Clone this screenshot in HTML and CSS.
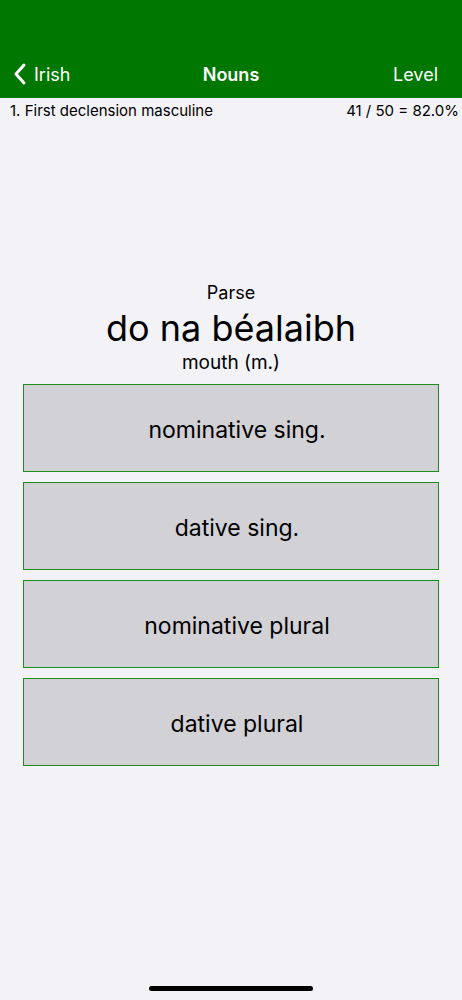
FILE: index.html
```html
<!DOCTYPE html>
<html lang="en">
<head>
    <meta charset="UTF-8">
    <meta name="viewport" content="width=device-width, initial-scale=1.0">
    <title>Nouns</title>
    <link rel="stylesheet" href="styles.css">
</head>
<body>
<div class="header">
    <div class="nav">
        <a class="back" href="#">
            <svg class="chevron" width="14" height="24" viewBox="0 0 14 24">
                <path d="M11 3 L3 12 L11 21" fill="none" stroke="#fff" stroke-width="3" stroke-linecap="round" stroke-linejoin="round"/>
            </svg>
            <span>Irish</span>
        </a>
        <div class="title">Nouns</div>
        <a class="level" href="#">Level</a>
    </div>
</div>

<div class="status">
    <span>1. First declension masculine</span>
    <span>41 / 50 = 82.0%</span>
</div>

<div class="question">
    <div class="prompt">Parse</div>
    <div class="word">do na béalaibh</div>
    <div class="gloss">mouth (m.)</div>
</div>

<div class="answers">
    <button class="answer">nominative sing.</button>
    <button class="answer">dative sing.</button>
    <button class="answer">nominative plural</button>
    <button class="answer">dative plural</button>
</div>

<div class="home-bar"></div>
</body>
</html>
```

FILE: styles.css
```css
body {
    font-family: Inter, "Noto Sans", sans-serif;
    background-color: #f2f2f7;
    margin: 0;
    padding: 0;
    height: 1000px;
    position: relative;
    color: #000;
}

.header {
    background-color: #007700;
    height: 98px;
    padding-top: 54px;
    box-sizing: border-box;
}

.nav {
    height: 40px;
    display: flex;
    align-items: center;
    justify-content: space-between;
    padding: 0 24px 0 13px;
    color: #fff;
    font-size: 18px;
    position: relative;
}

.nav a {
    color: #fff;
    text-decoration: none;
}

.back {
    display: flex;
    align-items: center;
    gap: 7px;
}

.title {
    position: absolute;
    left: 0;
    right: 0;
    text-align: center;
    font-weight: 600;
    pointer-events: none;
}

.status {
    display: flex;
    justify-content: space-between;
    padding: 1px 3px 0 10px;
    height: 24px;
    line-height: 24px;
    font-size: 15px;
}

.question {
    margin-top: 159px;
    text-align: center;
}

.prompt {
    font-size: 18px;
    line-height: 22px;
}

.word {
    font-size: 36px;
    line-height: 48px;
}

.gloss {
    font-size: 19px;
    line-height: 22px;
}

.answers {
    margin: 10px 23px 0;
    display: flex;
    flex-direction: column;
    gap: 10px;
}

.answer {
    height: 88px;
    background-color: #d1d1d6;
    border: 1px solid #1f8c1f;
    font-family: inherit;
    font-size: 23px;
    color: #000;
    padding: 4px 0 0 12px;
}

.home-bar {
    position: absolute;
    left: 149px;
    width: 164px;
    bottom: 9px;
    height: 5px;
    border-radius: 3px;
    background-color: #000;
}
```
